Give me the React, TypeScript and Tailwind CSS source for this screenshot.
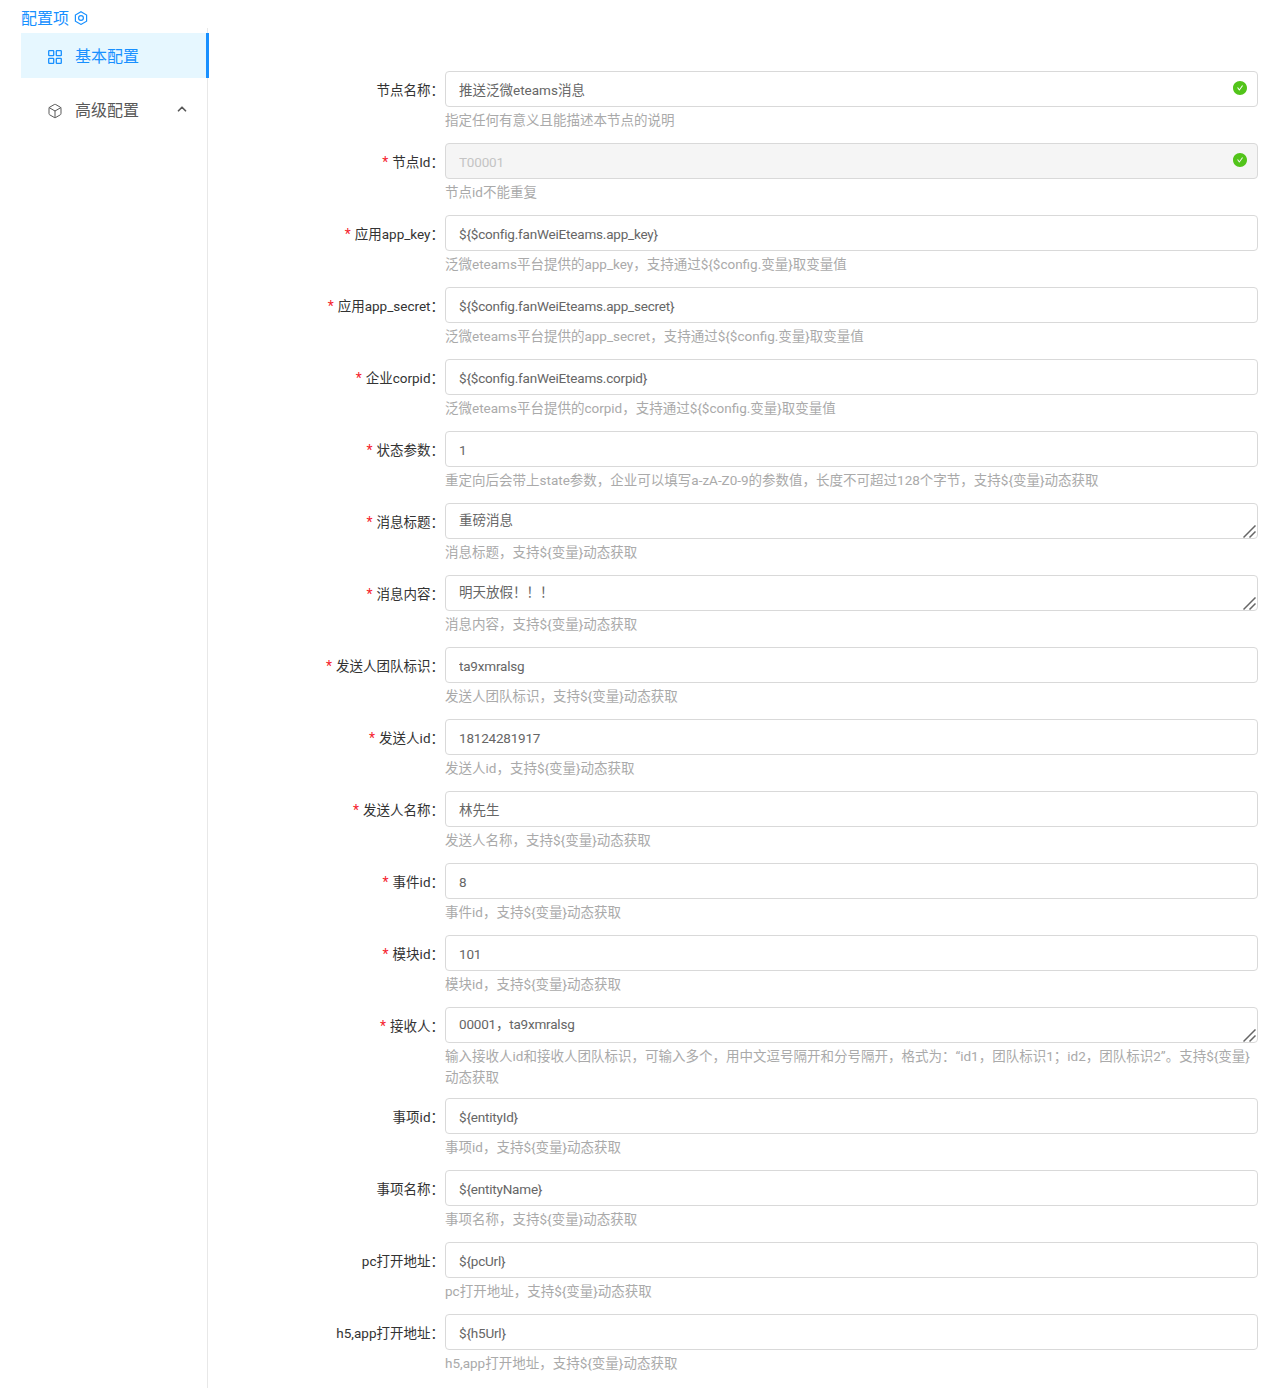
import { AiFillCheckCircle } from 'react-icons/ai';
import { Box, ChevronUp } from 'lucide-react';

type Field = {
    label: string;
    value: string;
    help: string;
    required?: boolean;
    textarea?: boolean;
    disabled?: boolean;
    valid?: boolean;
};

const fields: Field[] = [
    { label: '节点名称', value: '推送泛微eteams消息', help: '指定任何有意义且能描述本节点的说明', valid: true },
    { label: '节点Id', value: 'T00001', help: '节点id不能重复', required: true, disabled: true, valid: true },
    { label: '应用app_key', value: '${$config.fanWeiEteams.app_key}', help: '泛微eteams平台提供的app_key，支持通过${$config.变量}取变量值', required: true },
    { label: '应用app_secret', value: '${$config.fanWeiEteams.app_secret}', help: '泛微eteams平台提供的app_secret，支持通过${$config.变量}取变量值', required: true },
    { label: '企业corpid', value: '${$config.fanWeiEteams.corpid}', help: '泛微eteams平台提供的corpid，支持通过${$config.变量}取变量值', required: true },
    { label: '状态参数', value: '1', help: '重定向后会带上state参数，企业可以填写a-zA-Z0-9的参数值，长度不可超过128个字节，支持${变量}动态获取', required: true },
    { label: '消息标题', value: '重磅消息', help: '消息标题，支持${变量}动态获取', required: true, textarea: true },
    { label: '消息内容', value: '明天放假！！！', help: '消息内容，支持${变量}动态获取', required: true, textarea: true },
    { label: '发送人团队标识', value: 'ta9xmralsg', help: '发送人团队标识，支持${变量}动态获取', required: true },
    { label: '发送人id', value: '18124281917', help: '发送人id，支持${变量}动态获取', required: true },
    { label: '发送人名称', value: '林先生', help: '发送人名称，支持${变量}动态获取', required: true },
    { label: '事件id', value: '8', help: '事件id，支持${变量}动态获取', required: true },
    { label: '模块id', value: '101', help: '模块id，支持${变量}动态获取', required: true },
    { label: '接收人', value: '00001，ta9xmralsg', help: '输入接收人id和接收人团队标识，可输入多个，用中文逗号隔开和分号隔开，格式为：“id1，团队标识1；id2，团队标识2”。支持${变量}动态获取', required: true, textarea: true },
    { label: '事项id', value: '${entityId}', help: '事项id，支持${变量}动态获取' },
    { label: '事项名称', value: '${entityName}', help: '事项名称，支持${变量}动态获取' },
    { label: 'pc打开地址', value: '${pcUrl}', help: 'pc打开地址，支持${变量}动态获取' },
    { label: 'h5,app打开地址', value: '${h5Url}', help: 'h5,app打开地址，支持${变量}动态获取' },
];

function FormRow({ field }: { field: Field }) {
    // latin-only values sit a pixel lower than ones with CJK fallback glyphs
    const latinOnly = !/[\u4e00-\u9fa5]/.test(field.value);
    return (
        <div className="flex mb-[10px]">
            <div className="w-[236px] h-9 pt-[2px] flex items-center justify-end pr-[1px] text-[13.5px] text-[#333]">
                {field.required && <span className="text-[#f5222d] mr-1 text-[14px]">*</span>}
                <span>{field.label}：</span>
            </div>
            <div className="flex-1 min-w-0">
                <div className="relative h-9">
                    {field.textarea ? (
                        <>
                            <textarea
                                readOnly
                                defaultValue={field.value}
                                className={`block w-full h-9 min-h-9 resize-none border border-[#d9d9d9] rounded px-[13px] py-[5px] text-[13.5px] leading-[22px] text-[#666] outline-none ${latinOnly ? 'tracking-[-0.2px]' : ''}`}
                            />
                            <svg viewBox="0 0 13 13" className="absolute right-[2px] bottom-[1px] w-[13px] h-[13px]" stroke="#666" strokeWidth="1.5">
                                <path d="M0.5 12.5 12.5 0.5M6.5 12.5l6-6" />
                            </svg>
                        </>
                    ) : (
                        <input
                            readOnly
                            disabled={field.disabled}
                            defaultValue={field.value}
                            className={`block w-full h-9 border border-[#d9d9d9] rounded px-[13px] text-[13.5px] outline-none ${latinOnly ? 'pt-[2px] tracking-[-0.2px]' : ''} ${field.disabled ? 'bg-[#f5f5f5] text-[#c4c4c4]' : 'bg-white text-[#666]'}`}
                        />
                    )}
                    {field.valid && (
                        <AiFillCheckCircle className="absolute right-[10px] top-[9px] text-[#52c41a] text-[16px]" />
                    )}
                </div>
                <div className="min-h-[26px] pt-[3px] text-[13.5px] leading-[21px] text-[#aaa]">{field.help}</div>
            </div>
        </div>
    );
}

export default function App() {
    return (
        <div
            className="w-[1266px] h-[1388px] overflow-hidden bg-white flex"
            style={{ fontFamily: 'Roboto, "Noto Sans CJK SC", sans-serif' }}
        >
            {/* Sidebar */}
            <div className="w-[209px] pl-[21px] shrink-0">
                <div className="h-[28px] pt-[10px] flex items-start gap-[5px] text-[#1890ff] text-[16px] leading-[18px]">
                    <span>配置项</span>
                    <svg viewBox="0 0 14 14" className="w-[14px] h-[14px] mt-[1px]" fill="none" stroke="currentColor" strokeWidth="1.2">
                        <path d="M7 .8 12.6 4v6.2L7 13.4 1.4 10.2V4z" />
                        <circle cx="7" cy="7" r="2.4" />
                    </svg>
                </div>
                <div className="h-[1360px] pt-[5px] border-r border-[#e8e8e8] mr-[1px]">
                    <div className="h-[45px] -mr-[2px] bg-[#e6f7ff] border-r-[3px] border-[#1890ff] flex items-center pl-[27px] text-[#1890ff] text-[16px]">
                        <svg viewBox="0 0 14 14" className="w-[14px] h-[14px] mr-[13px] mt-[3px]" fill="none" stroke="currentColor" strokeWidth="1.3">
                            <rect x=".7" y=".7" width="5" height="5" rx=".6" />
                            <rect x="8.3" y=".7" width="5" height="5" rx=".6" />
                            <rect x=".7" y="8.3" width="5" height="5" rx=".6" />
                            <rect x="8.3" y="8.3" width="5" height="5" rx=".6" />
                        </svg>
                        <span className="mt-[3px]">基本配置</span>
                    </div>
                    <div className="mt-[9px] h-[45px] flex items-center pl-[26px] pr-[18px] text-[#595959] text-[16px]">
                        <Box className="w-[16px] h-[16px] mr-[12px] mt-[2px]" strokeWidth={1.5} />
                        <span className="flex-1 mt-[2px]">高级配置</span>
                        <ChevronUp className="w-[14px] h-[14px] -mt-[2px]" strokeWidth={3} />
                    </div>
                </div>
            </div>

            {/* Form */}
            <div className="flex-1 min-w-0 pt-[71px] pr-2">
                {fields.map(f => (
                    <FormRow key={f.label} field={f} />
                ))}
            </div>
        </div>
    );
}
